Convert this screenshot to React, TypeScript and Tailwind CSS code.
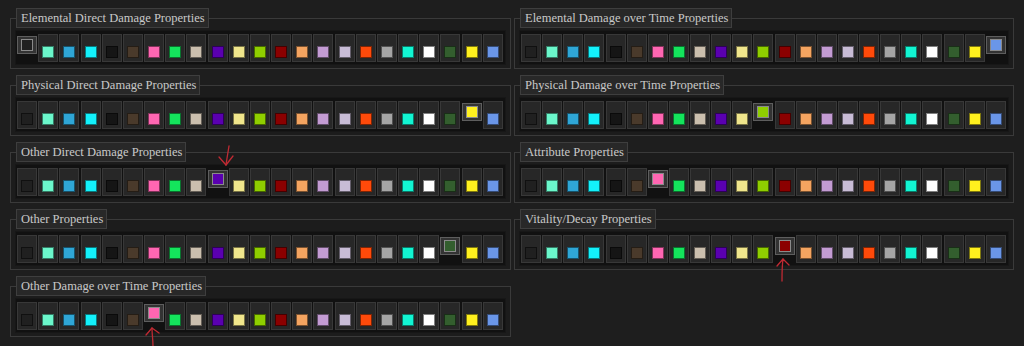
import React from "react";

const COLORS = [
  "#202020", "#6bf7cb", "#2fa6d6", "#13f1fb", "#151515", "#4a3a2b", "#ff66b2", "#14e45c",
  "#cbbfae", "#5a00b0", "#f0e68c", "#8fce00", "#8b0000", "#f4a460", "#c39bd3", "#c8bcd6",
  "#ff4a0a", "#a5a5a5", "#12f5d2", "#ffffff", "#335e2e", "#fff01e", "#6a96e8",
];

type Group = { title: string; selected: number };

const LEFT: Group[] = [
  { title: "Elemental Direct Damage Properties", selected: 0 },
  { title: "Physical Direct Damage Properties", selected: 21 },
  { title: "Other Direct Damage Properties", selected: 9 },
  { title: "Other Properties", selected: 20 },
  { title: "Other Damage over Time Properties", selected: 6 },
];

const RIGHT: Group[] = [
  { title: "Elemental Damage over Time Properties", selected: 22 },
  { title: "Physical Damage over Time Properties", selected: 11 },
  { title: "Attribute Properties", selected: 6 },
  { title: "Vitality/Decay Properties", selected: 12 },
];

const Swatch = ({ color, active }: { color: string; active: boolean }) => {
  if (active) {
    return (
      <button className="mt-[2px] flex h-[18px] w-[20px] shrink-0 items-center justify-center border border-[#5e5e5e] bg-[#333333]">
        <span className="h-[12px] w-[12px] border border-[#8a8a8a]" style={{ backgroundColor: color }} />
      </button>
    );
  }
  return (
    <button className="flex h-[28px] w-[20px] shrink-0 items-end justify-center border border-[#383838] bg-[#272727] pb-[3px]">
      <span className="h-[12px] w-[12px] border border-black/50" style={{ backgroundColor: color }} />
    </button>
  );
};

const Panel = ({ group }: { group: Group }) => (
  <fieldset className="border border-[#3a3a3a] bg-[#1c1c1c]">
    <legend className="ml-[5px] flex h-[20px] items-center border border-[#3e3e3e] bg-[#282828] pl-[4px] pr-[3px] text-[12.5px] leading-none text-[#c8c8c8]">
      {group.title}
    </legend>
    <div className="mx-[4px] mb-[3px] mt-[2px] flex h-[35px] items-start justify-between border border-[#171717] bg-[#111111] pl-[1px] pr-[2px] pt-[3px]">
      {COLORS.map((c, i) => (
        <Swatch key={i} color={c} active={i === group.selected} />
      ))}
    </div>
  </fieldset>
);

export default function App() {
  return (
    <div
      className="relative h-[346px] w-[1024px] overflow-hidden bg-[#1e1e1e] pl-[10px] pt-[8px]"
      style={{ fontFamily: '"Liberation Serif", "DejaVu Serif", serif' }}
    >
      <div className="grid grid-cols-[501px_500px] items-start gap-x-[3px]">
        <div className="flex flex-col gap-[6px]">
          {LEFT.map((g) => (
            <Panel key={g.title} group={g} />
          ))}
        </div>
        <div className="flex flex-col gap-[6px]">
          {RIGHT.map((g) => (
            <Panel key={g.title} group={g} />
          ))}
        </div>
      </div>

      {/* hand-drawn annotation arrows */}
      <svg className="pointer-events-none absolute left-0 top-0" width="1024" height="346" fill="none">
        <g stroke="#c02a33" strokeWidth="1.3" strokeLinecap="round" strokeLinejoin="round">
          <path d="M229 146 C228 152 227 158 226 165" />
          <path d="M219 157 L226 165 L233 156" />
          <path d="M152 328 C152 334 153 340 153 346" />
          <path d="M146 335 L152 328 L159 333" />
          <path d="M783 259 C782 266 782 273 782 281" />
          <path d="M777 266 L783 259 L789 265" />
        </g>
      </svg>
    </div>
  );
}
